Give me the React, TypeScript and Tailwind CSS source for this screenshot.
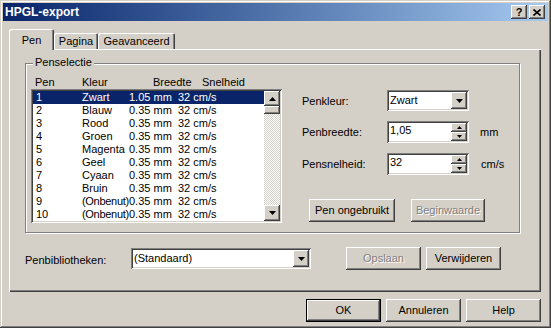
import React from "react";

const raised =
  "shadow-[inset_-1px_-1px_#404040,inset_1px_1px_#ffffff,inset_-2px_-2px_#808080,inset_2px_2px_#d4d0c8]";
const sunken =
  "shadow-[inset_1px_1px_#808080,inset_-1px_-1px_#ffffff,inset_2px_2px_#404040,inset_-2px_-2px_#d4d0c8]";

const rows = [
  ["1", "Zwart", "1.05 mm", "32 cm/s"],
  ["2", "Blauw", "0.35 mm", "32 cm/s"],
  ["3", "Rood", "0.35 mm", "32 cm/s"],
  ["4", "Groen", "0.35 mm", "32 cm/s"],
  ["5", "Magenta", "0.35 mm", "32 cm/s"],
  ["6", "Geel", "0.35 mm", "32 cm/s"],
  ["7", "Cyaan", "0.35 mm", "32 cm/s"],
  ["8", "Bruin", "0.35 mm", "32 cm/s"],
  ["9", "(Onbenut)", "0.35 mm", "32 cm/s"],
  ["10", "(Onbenut)", "0.35 mm", "32 cm/s"],
];

function Down({ w = 7, h = 4 }: { w?: number; h?: number }) {
  return (
    <svg width={w} height={h} viewBox={`0 0 ${w} ${h}`} className="block">
      <polygon points={`0,0 ${w},0 ${w / 2},${h}`} fill="#000" />
    </svg>
  );
}
function Up({ w = 7, h = 4 }: { w?: number; h?: number }) {
  return (
    <svg width={w} height={h} viewBox={`0 0 ${w} ${h}`} className="block">
      <polygon points={`0,${h} ${w},${h} ${w / 2},0`} fill="#000" />
    </svg>
  );
}

function Combo({ text, w }: { text: string; w: string }) {
  return (
    <div className={`${w} h-[21px] bg-white ${sunken} p-[2px] flex`}>
      <div className="flex-1 pl-[1px] leading-[17px]">{text}</div>
      <div className={`w-[16px] h-[17px] bg-[#d4d0c8] ${raised} flex items-center justify-center`}>
        <Down />
      </div>
    </div>
  );
}

function Spin({ text }: { text: string }) {
  return (
    <div className={`w-[82px] h-[22px] bg-white ${sunken} p-[2px] flex`}>
      <div className="flex-1 pl-[1px] leading-[15px]">{text}</div>
      <div className="w-[16px] flex flex-col">
        <div className={`h-[9px] bg-[#d4d0c8] ${raised} flex items-center justify-center`}>
          <Up w={5} h={3} />
        </div>
        <div className={`h-[9px] bg-[#d4d0c8] ${raised} flex items-center justify-center`}>
          <Down w={5} h={3} />
        </div>
      </div>
    </div>
  );
}

function Btn({ text, w, disabled }: { text: string; w: string; disabled?: boolean }) {
  return (
    <div
      className={`${w} h-[23px] ${raised} flex items-center justify-center ${
        disabled ? "text-[#808080] [text-shadow:1px_1px_0_#ffffff]" : ""
      }`}
    >
      {text}
    </div>
  );
}

export default function App() {
  return (
    <div className="w-[551px] h-[328px] p-[3px] flex flex-col bg-[#d4d0c8] text-black text-[11px] leading-[13px] font-['Liberation_Sans',Arial,sans-serif] shadow-[inset_-1px_-1px_#404040,inset_1px_1px_#d4d0c8,inset_-2px_-2px_#808080,inset_2px_2px_#ffffff]">
      {/* caption */}
      <div className="h-[18px] flex items-center bg-linear-to-r from-[#0a246a] to-[#a6caf0]">
        <div className="pl-[2px] text-white font-bold text-[12px] leading-none">HPGL-export</div>
        <div className="ml-auto pr-[3px] flex gap-[2px]">
          <div className={`w-[16px] h-[14px] bg-[#d4d0c8] ${raised} flex items-center justify-center font-bold text-[11px] leading-none`}>
            ?
          </div>
          <div className={`w-[16px] h-[14px] bg-[#d4d0c8] ${raised} flex items-center justify-center`}>
            <svg width="8" height="7" viewBox="0 0 8 7" className="block">
              <path d="M0.5 0.5L7.5 6.5M7.5 0.5L0.5 6.5" stroke="#000" strokeWidth="1.6" />
            </svg>
          </div>
        </div>
      </div>

      {/* tabs */}
      <div className="mt-[8px] ml-[6px] h-[20px] flex items-end">
        <div className="relative z-10 -mb-px w-[45px] h-[21px] bg-[#d4d0c8] rounded-t-[2px] shadow-[inset_1px_1px_#ffffff,inset_-1px_0_#404040,inset_-2px_0_#808080] flex justify-center pt-[5px]">
          Pen
        </div>
        <div className="w-[44px] h-[16px] rounded-t-[2px] shadow-[inset_1px_1px_#ffffff,inset_-1px_0_#404040,inset_-2px_0_#808080] flex justify-center pt-[2px]">
          Pagina
        </div>
        <div className="w-[77px] h-[16px] rounded-t-[2px] shadow-[inset_1px_1px_#ffffff,inset_-1px_0_#404040,inset_-2px_0_#808080] flex justify-center pt-[2px]">
          Geavanceerd
        </div>
      </div>

      {/* panel */}
      <div className="ml-[6px] w-[532px] h-[243px] shadow-[inset_1px_1px_#ffffff,inset_-1px_-1px_#404040,inset_-2px_-2px_#808080] flex flex-col pl-[16px] pt-[14px]">
        <div className="relative w-[495px] h-[170px] border border-[#808080] shadow-[inset_1px_1px_#ffffff,1px_1px_#ffffff] flex pl-[5px] pt-[12px]">
          <div className="absolute left-[7px] top-[-8px] px-[2px] bg-[#d4d0c8]">Penselectie</div>

          <div className="flex flex-col">
            <div className="h-[13px] flex pl-[4px]">
              <span className="w-[47px]">Pen</span>
              <span className="w-[71px]">Kleur</span>
              <span className="w-[49px]">Breedte</span>
              <span>Snelheid</span>
            </div>
            <div className={`w-[251px] h-[134px] bg-white ${sunken} p-[2px] flex`}>
              <div className="w-[231px] flex flex-col">
                {rows.map((r, i) => (
                  <div
                    key={i}
                    className={`h-[13px] flex pl-[3px] whitespace-nowrap ${
                      i === 0 ? "bg-[#0a246a] text-white" : ""
                    }`}
                  >
                    <span className="w-[46px]">{r[0]}</span>
                    <span className={`w-[47px] ${r[1].length > 8 ? "tracking-[-0.3px]" : ""}`}>{r[1]}</span>
                    <span className="w-[49px]">{r[2]}</span>
                    <span>{r[3]}</span>
                  </div>
                ))}
              </div>
              <div className="w-[16px] flex flex-col">
                <div className={`h-[15px] bg-[#d4d0c8] ${raised} flex items-center justify-center`}>
                  <Up />
                </div>
                <div className={`h-[8px] bg-[#d4d0c8] ${raised}`} />
                <div className="flex-1 bg-[repeating-conic-gradient(#ffffff_0%_25%,#d4d0c8_0%_50%)] bg-[length:2px_2px]" />
                <div className={`h-[16px] bg-[#d4d0c8] ${raised} flex items-center justify-center`}>
                  <Down />
                </div>
              </div>
            </div>
          </div>

          <div className="ml-[20px] pt-[14px] flex flex-col">
            <div className="h-[21px] flex items-center">
              <span className="w-[85px] pt-[2px]">Penkleur:</span>
              <Combo text="Zwart" w="w-[82px]" />
            </div>
            <div className="mt-[10px] h-[22px] flex items-center">
              <span className="w-[85px]">Penbreedte:</span>
              <Spin text="1,05" />
              <span className="ml-[11px]">mm</span>
            </div>
            <div className="mt-[10px] h-[22px] flex items-center">
              <span className="w-[85px]">Pensnelheid:</span>
              <Spin text="32" />
              <span className="ml-[12px]">cm/s</span>
            </div>
            <div className="mt-[24px] pl-[7px] flex gap-[16px]">
              <Btn text="Pen ongebruikt" w="w-[86px]" />
              <Btn text="Beginwaarde" w="w-[74px]" disabled />
            </div>
          </div>
        </div>

        <div className="mt-[14px] h-[23px] flex items-center">
          <span className="w-[106px] pt-[4px]">Penbibliotheken:</span>
          <Combo text="(Standaard)" w="w-[180px]" />
          <div className="ml-[35px]">
            <Btn text="Opslaan" w="w-[75px]" disabled />
          </div>
          <div className="ml-[5px]">
            <Btn text="Verwijderen" w="w-[75px]" />
          </div>
        </div>
      </div>

      {/* bottom buttons */}
      <div className="mt-[7px] pr-[7px] flex justify-end gap-[5px]">
        <div className="w-[75px] h-[23px] border border-black">
          <div className={`w-full h-full ${raised} flex items-center justify-center`}>OK</div>
        </div>
        <Btn text="Annuleren" w="w-[75px]" />
        <Btn text="Help" w="w-[75px]" />
      </div>
    </div>
  );
}
